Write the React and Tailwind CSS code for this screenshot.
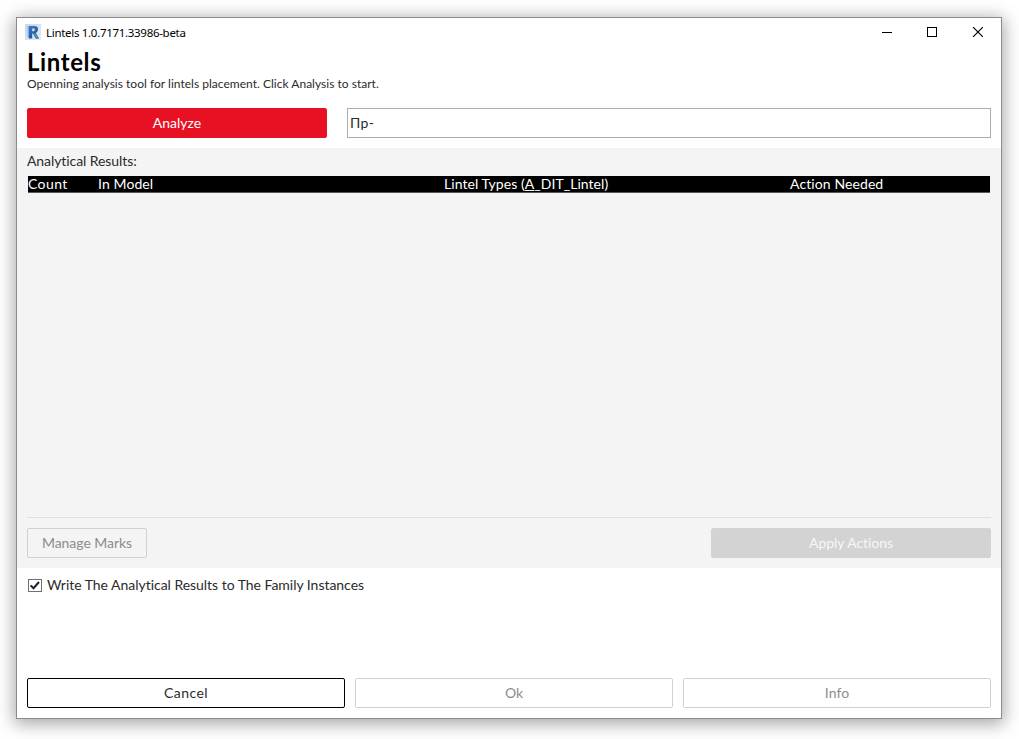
import React from "react";

function RevitIcon() {
  return (
    <svg width="16" height="16" viewBox="0 0 16 16">
      <defs>
        <linearGradient id="tile" x1="0" y1="0" x2="1" y2="1">
          <stop offset="0" stopColor="#c3d9f0" />
          <stop offset="1" stopColor="#e4ebf7" />
        </linearGradient>
        <linearGradient id="letter" x1="0" y1="0" x2="0.6" y2="1">
          <stop offset="0" stopColor="#3f7cc4" />
          <stop offset="1" stopColor="#1d4f8a" />
        </linearGradient>
      </defs>
      <rect width="16" height="16" fill="url(#tile)" />
      <path d="M2.6 2 H4.6 V15 L2.6 13 Z" fill="#80b4e6" />
      <path
        d="M4 2 H9.5 C12.3 2 13 3.6 13 5.3 C13 7.2 12.2 8.3 10.8 8.9 L14 14.6 H10.6 L8 9.5 H7.2 V14.6 H4 Z M7.2 4.4 V7.2 H8.5 C9.4 7.2 9.8 6.6 9.8 5.8 C9.8 4.9 9.4 4.4 8.5 4.4 Z"
        fill="url(#letter)"
        fillRule="evenodd"
      />
      <path d="M8.2 9.5 H10.8 L14 14.6 H10.9 Z" fill="#3b94b8" />
    </svg>
  );
}

function TitleBar() {
  return (
    <div className="flex h-7 items-center pl-2 pr-[18px]">
      <RevitIcon />
      <span className="ml-[5px] flex-1 pt-px font-['Noto_Sans',sans-serif] text-[11.5px] leading-4 tracking-[-0.3px] text-black">
        Lintels 1.0.7171.33986-beta
      </span>
      <div className="flex items-center gap-[35px]">
        <svg width="10" height="10" viewBox="0 0 10 10" shapeRendering="crispEdges">
          <rect y="5" width="10" height="1" fill="#000" />
        </svg>
        <svg width="10" height="10" viewBox="0 0 10 10">
          <rect x="0.5" y="0.5" width="9" height="9" fill="none" stroke="#000" />
        </svg>
        <svg width="11" height="10" viewBox="0 0 11 10">
          <path d="M1 0 L11 10 M11 0 L1 10" stroke="#000" strokeWidth="1.1" />
        </svg>
      </div>
    </div>
  );
}

function Button({ className, children }) {
  return (
    <button className={"flex h-[30px] items-center justify-center rounded-[2px] border pb-[2px] " + className}>
      {children}
    </button>
  );
}

export default function App() {
  return (
    <div className="h-[739px] w-[1019px] overflow-hidden bg-white pl-4 pt-[17px] font-['Lato',sans-serif] text-[14px] leading-[17px] text-[#2b2b2b] [font-variant-ligatures:none]">
      <div className="flex h-[702px] w-[986px] flex-col border border-[#8c8c8c] bg-white shadow-[0_3px_16px_2px_rgba(0,0,0,0.35)]">
        <TitleBar />
        <header className="h-[62px] px-[10px] pt-[2px]">
          <h1 className="h-[27px] text-[24px] font-bold leading-[27px] text-black">
            <span className="tracking-[0.6px]">Lintels</span>
          </h1>
          <p className="text-[12px] leading-[17px]">
            <span className="tracking-[0.02px]">Openning analysis tool for lintels placement. Click Analysis to start.</span>
          </p>
        </header>
        <div className="flex h-10 gap-5 px-[10px]">
          <Button className="w-[300px] border-[#e81123] bg-[#e81123] text-white">
            <span>Analyze</span>
          </Button>
          <div className="flex h-[30px] flex-1 items-center border border-[#abadb3] pb-[2px] pl-[2px]">
            <span className="tracking-[0.4px]">Пр-</span>
          </div>
        </div>
        <section className="flex h-[420px] flex-col bg-[#f4f4f4] px-[10px] pt-1">
          <div className="h-6">
            <span className="tracking-[-0.08px]">Analytical Results:</span>
          </div>
          <div className="mx-px grid h-[17px] grid-cols-[70px_346px_346px_1fr] border-b border-[#5a5456] bg-black leading-[15px] text-white">
            <div><span className="tracking-[0.4px]">Count</span></div>
            <div><span className="tracking-[0.1px]">In Model</span></div>
            <div>
              <span className="tracking-[0.05px]">
                Lintel Types (<span className="underline">A</span>_DIT_Lintel)
              </span>
            </div>
            <div><span className="tracking-[0.1px]">Action Needed</span></div>
          </div>
          <div className="flex-1" />
          <div className="flex h-[51px] justify-between border-t border-[#dfdfdf] pt-[10px]">
            <Button className="w-[120px] border-[#d1d1d1] text-[#8c8c8c]">
              <span className="tracking-[-0.05px]">Manage Marks</span>
            </Button>
            <Button className="w-[280px] border-[#d3d3d3] bg-[#d3d3d3] text-[#f7f7f7]">
              <span className="tracking-[-0.05px]">Apply Actions</span>
            </Button>
          </div>
        </section>
        <div className="flex h-[110px] items-start pl-[11px] pt-2">
          <svg className="mt-[3px]" width="14" height="13" viewBox="0 0 14 13">
            <rect x="0.5" y="0.5" width="13" height="12" fill="#fff" stroke="#707070" />
            <path d="M2.6 6.4 L5.5 9.2 L11 3" fill="none" stroke="#212121" strokeWidth="2" />
          </svg>
          <span className="ml-[5px] tracking-[-0.03px]">Write The Analytical Results to The Family Instances</span>
        </div>
        <footer className="flex gap-[10px] px-[10px]">
          <Button className="w-[318px] border-black">
            <span className="tracking-[0.4px]">Cancel</span>
          </Button>
          <Button className="w-[318px] border-[#d1d1d1] text-[#8c8c8c]">
            <span>Ok</span>
          </Button>
          <Button className="w-[308px] border-[#d1d1d1] text-[#8c8c8c]">
            <span className="tracking-[0.1px]">Info</span>
          </Button>
        </footer>
      </div>
    </div>
  );
}
